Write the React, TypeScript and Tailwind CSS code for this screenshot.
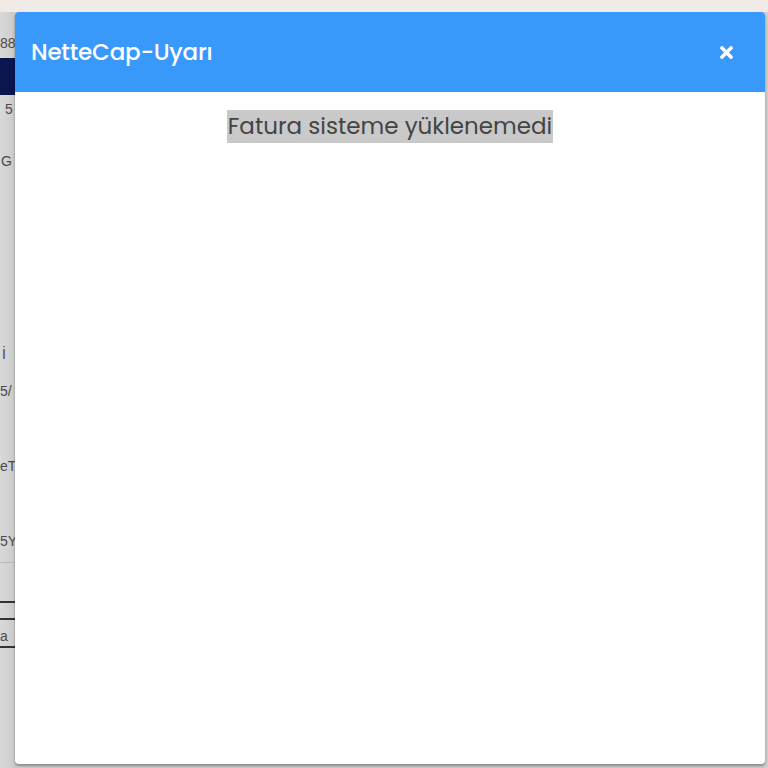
import { FaTimes } from "react-icons/fa";

const sans = "font-['Poppins','Inter','Noto_Sans',sans-serif]";

function BackgroundStrip() {
  // what peeks out from the page behind the overlay, clipped by the modal
  return (
    <div className="w-[15px] shrink-0 overflow-hidden bg-gradient-to-r from-[#d9d9d9] to-[#cbcbcb] text-[14px] leading-none text-[#4a4a4a] font-['Liberation_Sans',sans-serif]">
      <div className="mt-[24px] whitespace-nowrap">88</div>
      <div className="mt-[8px] h-[37px] bg-[#0b1650]" />
      <div className="mt-[7px] whitespace-nowrap pl-[5px]">5</div>
      <div className="mt-[38px] whitespace-nowrap pl-[1px]">G</div>
      <div className="mt-[179px] whitespace-nowrap pl-[2px]">İ</div>
      <div className="mt-[23px] whitespace-nowrap">5/</div>
      <div className="mt-[61px] whitespace-nowrap">eT</div>
      <div className="mt-[61px] whitespace-nowrap">5Y</div>
      <div className="mt-[14px] h-px bg-[#b8b8b8]" />
      <div className="mt-[38px] h-[2px] bg-[#333]" />
      <div className="mt-[15px] h-[2px] bg-[#333]" />
      <div className="mt-[9px] whitespace-nowrap">a</div>
      <div className="mt-[3px] h-[2px] bg-[#333]" />
    </div>
  );
}

export default function App() {
  return (
    <div className="flex h-[768px] w-[768px] flex-col overflow-hidden bg-[#cfcfcf]">
      <div className="h-[12px] shrink-0 bg-[#f1ebe7]" />
      <div className="flex flex-1">
        <BackgroundStrip />
        <div className="flex h-[752px] w-[750px] flex-col rounded-[4px] bg-white shadow-[0_2px_3px_rgba(0,0,0,0.35)]">
          <div className="flex h-[80px] items-center justify-between rounded-t-[4px] bg-[#3899fb] pl-[16px] pr-[29px]">
            <h2 className={`${sans} text-[23px] font-medium tracking-[-0.2px] text-white`}>
              NetteCap-Uyarı
            </h2>
            <button type="button" className="text-white">
              <FaTimes className="h-[19px] w-[19px]" />
            </button>
          </div>
          <div className="flex justify-center pt-[18px]">
            <span className={`${sans} bg-[#c9c9c9] px-[1px] text-[23px] leading-[33px] text-[#444]`}>
              Fatura sisteme yüklenemedi
            </span>
          </div>
        </div>
        <div className="flex-1" />
      </div>
    </div>
  );
}
